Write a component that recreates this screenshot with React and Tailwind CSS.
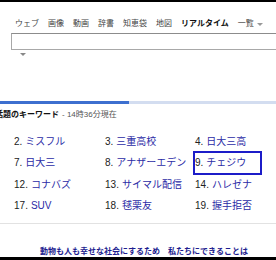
const navItems = ["ウェブ", "画像", "動画", "辞書", "知恵袋", "地図"]

const keywords = [
  [2, "ミスフル"],
  [3, "三重高校"],
  [4, "日大三高"],
  [7, "日大三"],
  [8, "アナザーエデン"],
  [9, "チェジウ"],
  [12, "コナバズ"],
  [13, "サイマル配信"],
  [14, "ハレゼナ"],
  [17, "SUV"],
  [18, "毬栗友"],
  [19, "握手拒否"],
]

const font = { fontFamily: '"Liberation Sans", "Noto Sans CJK JP", sans-serif' }

export default function App() {
  return (
    <div
      className="w-[276px] h-[260px] overflow-hidden bg-white border-t-2 border-b-[3px] border-black flex flex-col"
      style={font}
    >
      <div className="mt-[17px] h-[10px] pl-[15px] flex items-center gap-[9px] text-[8px] leading-[10px] text-[#444] whitespace-nowrap">
        {navItems.map((item) => (
          <span key={item}>{item}</span>
        ))}
        <span className="font-bold text-[#111]">リアルタイム</span>
        <span className="flex items-center gap-[3px]">
          一覧
          <span className="w-0 h-0 border-l-[3px] border-r-[3px] border-t-[3px] border-l-transparent border-r-transparent border-t-[#999]" />
        </span>
      </div>

      <div className="mt-[4px] ml-[11px] w-[280px] h-[17px] shrink-0 border border-[#a8a8a8] border-t-[#8c8c8c] bg-white" />
      <div className="mt-[3px] pl-[20px] h-[3px]">
        <div className="w-0 h-0 border-l-[3px] border-r-[3px] border-t-[3px] border-l-transparent border-r-transparent border-t-[#888]" />
      </div>

      <div className="mt-[45px] h-[3px] flex shrink-0">
        <div className="w-[129px] bg-[#3d6fcf]" />
        <div className="flex-1 bg-[#d3ddf0]" />
      </div>

      <div className="mt-[6px] -ml-[5px] h-[10px] flex items-center text-[8px] leading-[10px] whitespace-nowrap">
        <span className="font-bold text-[#111]">話題のキーワード</span>
        <span className="text-[#555] ml-[3px]">- 14時36分現在</span>
      </div>

      <div className="mt-[11px] pl-[14px] grid grid-cols-[91px_90px_1fr] auto-rows-[21.5px] text-[10px] leading-[12px] whitespace-nowrap">
        {keywords.map(([n, label]) => (
          <div key={n} className="flex items-center">
            {n === 9 ? (
              <div className="-ml-[2px] w-[69px] h-[24px] border-2 border-[#1c1cc8] flex items-center">
                <span className="text-[#222]">{n}.</span>
                <span className="ml-[3px] text-[#2b2ba6]">{label}</span>
              </div>
            ) : (
              <>
                <span className="text-[#222]">{n}.</span>
                <span className="ml-[3px] text-[#2b2ba6]">{label}</span>
              </>
            )}
          </div>
        ))}
      </div>

      <div className="mt-[6px] border-t border-[#e2e2e2]" />

      <div className="mt-[23px] pl-[40px] h-[10px] text-[8px] leading-[10px] font-bold text-[#1d1d8f] whitespace-nowrap">
        動物も人も幸せな社会にするため　私たちにできることは
      </div>
    </div>
  )
}
